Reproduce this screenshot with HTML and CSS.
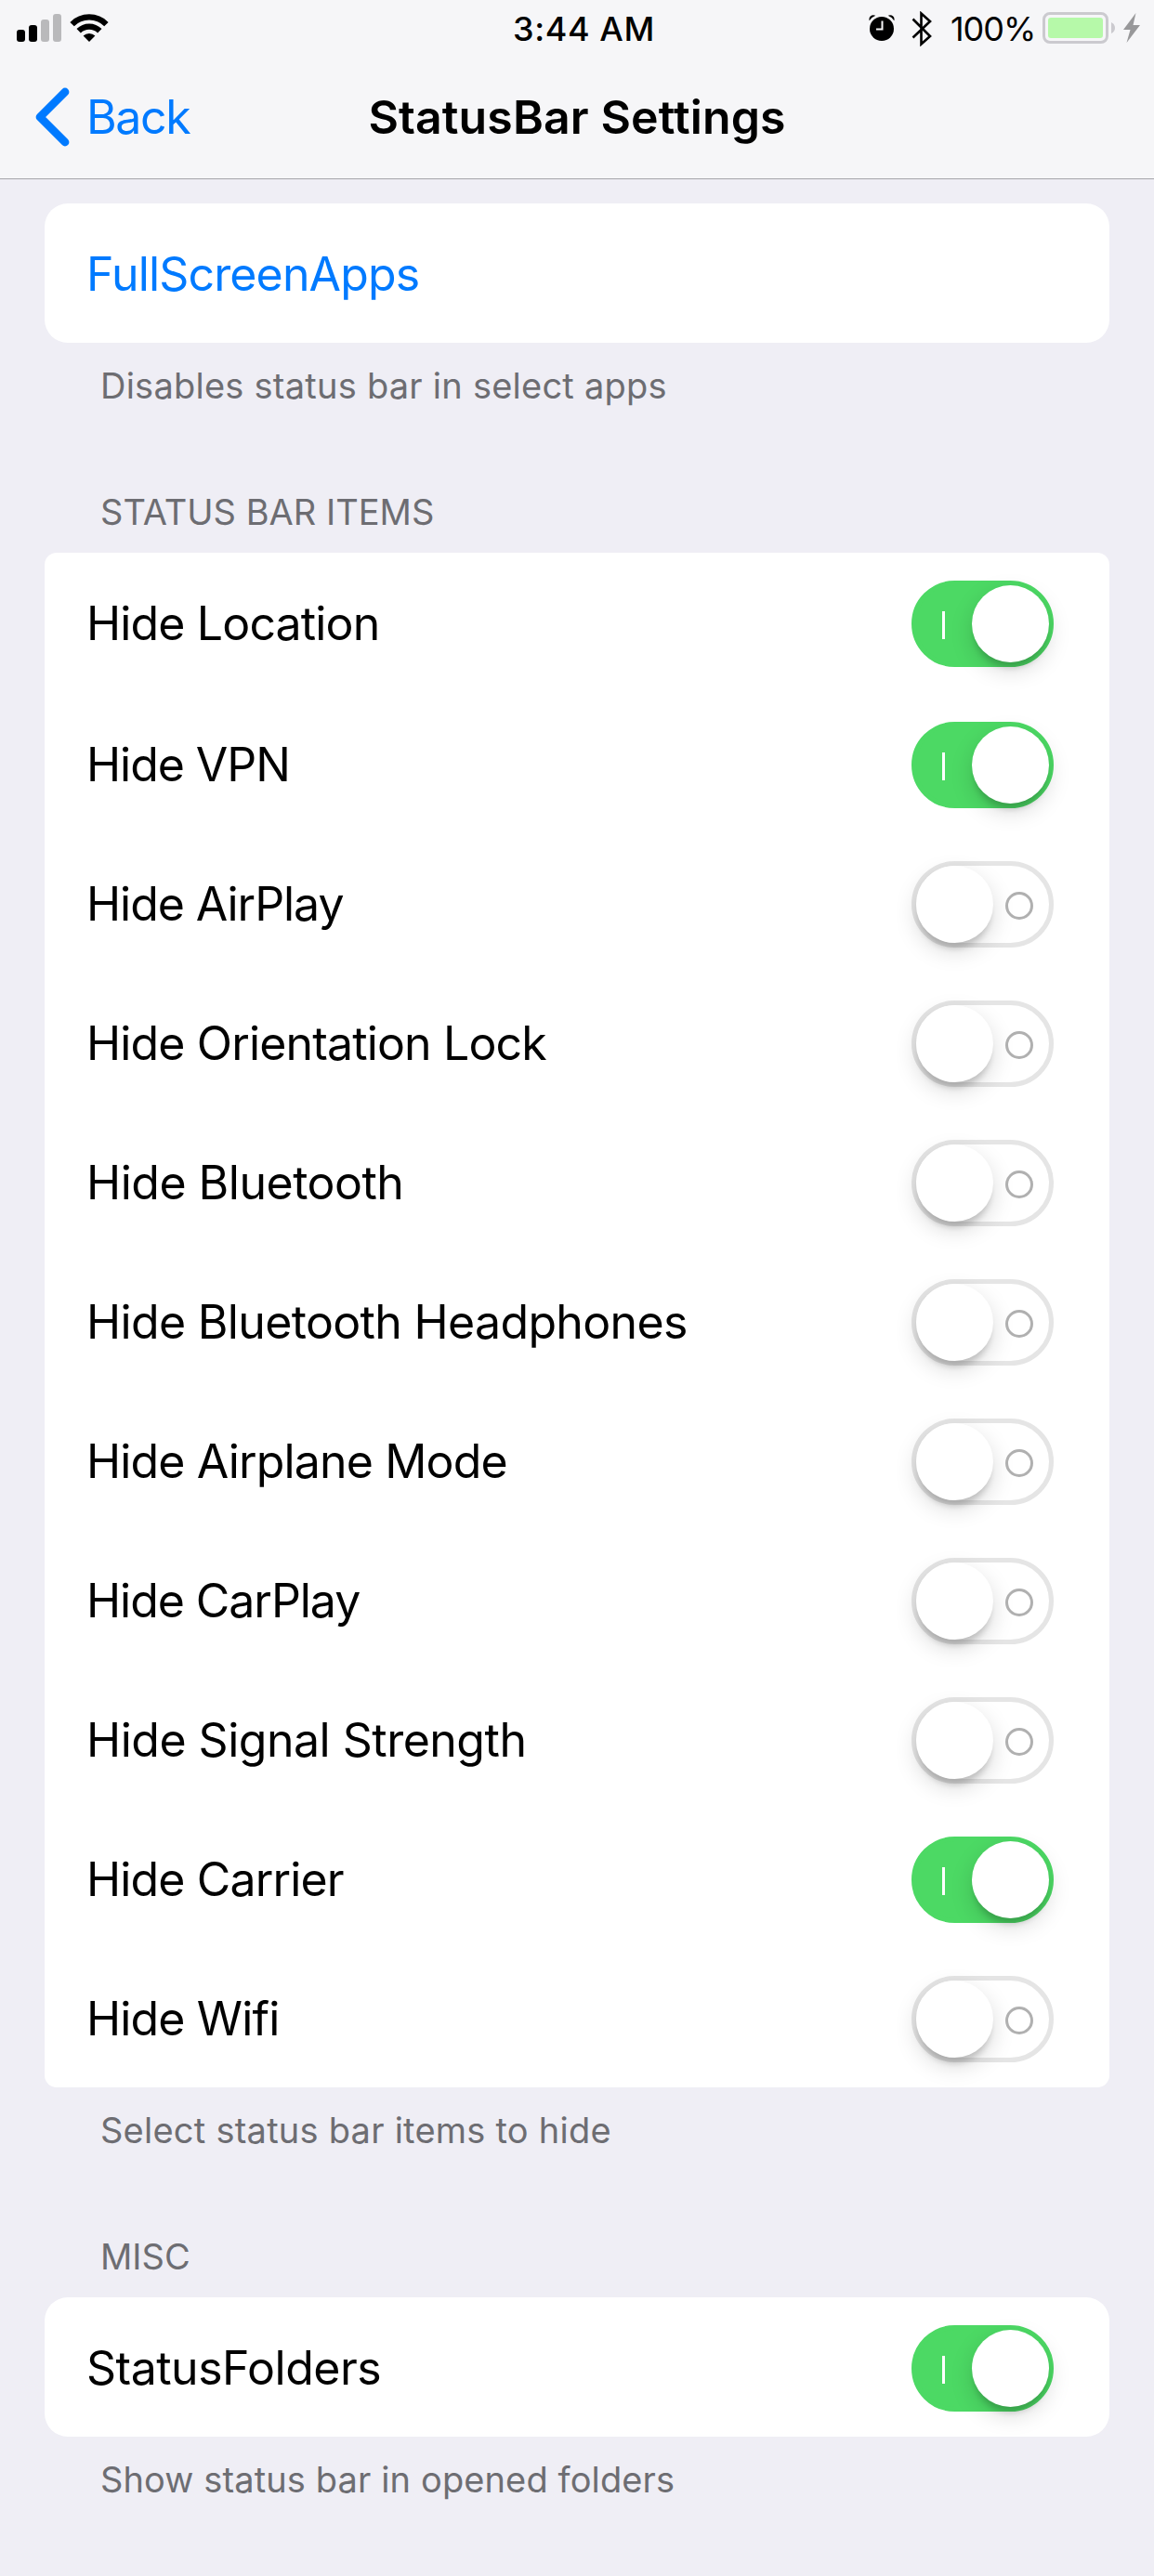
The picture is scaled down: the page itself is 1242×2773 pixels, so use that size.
FILE: index.html
```html
<!DOCTYPE html>
<html lang="en">
<head>
<meta charset="utf-8">
<title>StatusBar Settings</title>
<link rel="stylesheet" href="styles.css">
</head>
<body>
<header class="top">
  <div class="status">
    <div class="status-left">
      <svg width="48" height="30" viewBox="0 0 48 30">
        <rect x="0" y="17" width="9" height="13" rx="3"/>
        <rect x="13" y="12" width="9" height="18" rx="3"/>
        <rect class="dim" x="26" y="6" width="9" height="24" rx="3"/>
        <rect class="dim" x="39" y="0" width="9" height="30" rx="3"/>
      </svg>
      <svg width="42" height="30" viewBox="0 0 42 30">
        <path class="arc" d="M2.6 11.1a26 26 0 0 1 36.8 0M9.7 18.2a16 16 0 0 1 22.6 0"/>
        <path d="M21 30l-6.4-6.4a9 9 0 0 1 12.8 0z"/>
      </svg>
    </div>
    <div class="time">3:44 AM</div>
    <div class="status-right">
      <svg width="28" height="28" viewBox="0 0 28 28">
        <circle cx="14" cy="15" r="13"/>
        <path d="M.7 6.3C-.7 2 3.600-1 7.300.8Q3 2.500.7 6.300zM27.300 6.300C28.700 2 24.400-1 20.700.8Q25 2.500 27.300 6.300z"/>
        <path class="hands" d="M14.500 6.500v9H8"/>
      </svg>
      <svg class="bt" width="22" height="38" viewBox="0 0 22 38">
        <path d="M1.500 8.500L20 27l-9.500 8.500v-33L20 11 1.500 28.500"/>
      </svg>
      <span class="percent">100%</span>
      <span class="battery"><span class="charge"></span></span>
      <svg class="nub" width="4" height="12" viewBox="0 0 4 12"><path d="M0 0q4 2 4 6t-4 6z"/></svg>
      <svg class="bolt" width="18" height="32" viewBox="0 0 18 32"><path d="M13.500 0L0 18h7.500L3.500 32 18 13h-7.500z"/></svg>
    </div>
  </div>
  <nav class="nav">
    <a class="back">
      <svg width="38" height="64" viewBox="0 0 38 64"><path d="M33 5L6 32l27 27"/></svg>
      <span>Back</span>
    </a>
    <h1>StatusBar Settings</h1>
  </nav>
</header>
<main>
  <section>
    <div class="card">
      <div class="row link"><span>FullScreenApps</span></div>
    </div>
    <p class="note">Disables status bar in select apps</p>
  </section>
  <section>
    <h2>STATUS BAR ITEMS</h2>
    <div class="card long">
      <div class="row"><span>Hide Location</span><i class="switch on"><b></b><u></u></i></div>
      <div class="row tight"><span>Hide VPN</span><i class="switch on"><b></b><u></u></i></div>
      <div class="row tight"><span>Hide AirPlay</span><i class="switch"><u></u><b></b></i></div>
      <div class="row"><span>Hide Orientation Lock</span><i class="switch"><u></u><b></b></i></div>
      <div class="row loose"><span>Hide Bluetooth</span><i class="switch"><u></u><b></b></i></div>
      <div class="row medium"><span>Hide Bluetooth Headphones</span><i class="switch"><u></u><b></b></i></div>
      <div class="row"><span>Hide Airplane Mode</span><i class="switch"><u></u><b></b></i></div>
      <div class="row tight"><span>Hide CarPlay</span><i class="switch"><u></u><b></b></i></div>
      <div class="row loose"><span>Hide Signal Strength</span><i class="switch"><u></u><b></b></i></div>
      <div class="row"><span>Hide Carrier</span><i class="switch on"><b></b><u></u></i></div>
      <div class="row"><span>Hide Wifi</span><i class="switch"><u></u><b></b></i></div>
    </div>
    <p class="note">Select status bar items to hide</p>
  </section>
  <section>
    <h2>MISC</h2>
    <div class="card">
      <div class="row loose"><span>StatusFolders</span><i class="switch on"><b></b><u></u></i></div>
    </div>
    <p class="note last">Show status bar in opened folders</p>
  </section>
</main>
</body>
</html>
```
FILE: styles.css
```css
* { box-sizing: border-box; }
body {
  margin: 0;
  min-height: 2773px;
  background: #efeef5;
  color: #000;
  font-family: Inter, "Liberation Sans", sans-serif;
}
svg { display: block; flex: none; }
h1, h2, p { margin: 0; }

.top {
  height: 193px;
  background: #f6f6f8;
  border-bottom: 1px solid #a5a4aa;
}
.status {
  display: grid;
  grid-template-columns: 552px 383px 1fr;
  height: 62px;
}
.status-left { display: flex; gap: 9px; padding: 15px 0 0 18px; }
.dim { fill: #b9b9bb; }
.arc { fill: none; stroke: #000; stroke-width: 6.200; }
.time {
  padding-top: 9px;
  font-size: 36px;
  font-weight: 500;
  line-height: 44px;
  letter-spacing: .59px;
}
.status-right { display: flex; align-items: flex-start; padding-top: 16px; }
.hands { fill: none; stroke: #f6f6f8; stroke-width: 2; }
.bt { margin: -4px 0 0 18px; fill: none; stroke: #000; stroke-width: 2.600; }
.percent {
  width: 99px;
  margin: -7px 0 0 20px;
  font-size: 36px;
  line-height: 44px;
  letter-spacing: -1.020px;
}
.battery {
  width: 71px;
  height: 34px;
  margin-top: -3px;
  padding: 3px;
  border: 3px solid #cbcacf;
  border-radius: 8px;
}
.charge { display: block; height: 22px; border-radius: 3px; background: #b6f9a9; }
.nub { margin: 8px 9px 0 3px; fill: #cbcacf; }
.bolt { margin-top: -2px; fill: #98989a; }

.nav {
  display: grid;
  grid-template-columns: 1fr auto 1fr;
  height: 130px;
  padding-top: 32px;
}
.back { display: flex; padding-left: 37px; color: #007aff; font-size: 50px; line-height: 60px; }
.back svg { fill: none; stroke: #007aff; stroke-width: 8.800; stroke-linecap: round; stroke-linejoin: round; }
.back span { margin: 2px 0 0 18px; letter-spacing: -1.350px; }
h1 { padding-top: 2px; font-size: 50px; font-weight: 600; line-height: 60px; letter-spacing: .11px; }

main { padding: 26px 48px 0; }
.card { background: #fff; border-radius: 25px; }
.long { padding-bottom: 0; border-radius: 13px; }
.row {
  display: flex;
  justify-content: space-between;
  height: 150px;
  padding: 0 60px 0 45px;
  font-size: 50px;
  line-height: 60px;
  letter-spacing: -.850px;
}
.long .row:first-child { height: 152px; }
.row span { padding-top: 46px; }
.tight { letter-spacing: -1.050px; }
.medium { letter-spacing: -.660px; }
.loose { letter-spacing: -.500px; }
.link { color: #007aff; }
.note, h2 {
  padding: 23px 60px 90px;
  color: #6d6d72;
  font-size: 38px;
  font-weight: 400;
  line-height: 46px;
  letter-spacing: .24px;
}
h2 { padding: 0 60px 21px; letter-spacing: .02px; }
.last { padding-bottom: 0; letter-spacing: .12px; }

.switch {
  display: flex;
  width: 153px;
  height: 93px;
  margin-top: 30px;
  border: 5px solid #e5e5e5;
  border-radius: 47px;
}
.switch u {
  width: 83px;
  height: 83px;
  border-radius: 50%;
  background: #fff;
  box-shadow: 0 9px 24px rgba(0, 0, 0, .15), 0 9px 6px -3px rgba(0, 0, 0, .16);
}
.switch b {
  width: 30px;
  height: 30px;
  margin: 28px 0 0 13px;
  border: 3px solid #b0b0b0;
  border-radius: 50%;
}
.on { justify-content: space-between; border-color: #4cd964; background: #4cd964; }
.on b { width: 3px; margin-left: 28px; border: 0; border-radius: 0; background: #fff; }
```
